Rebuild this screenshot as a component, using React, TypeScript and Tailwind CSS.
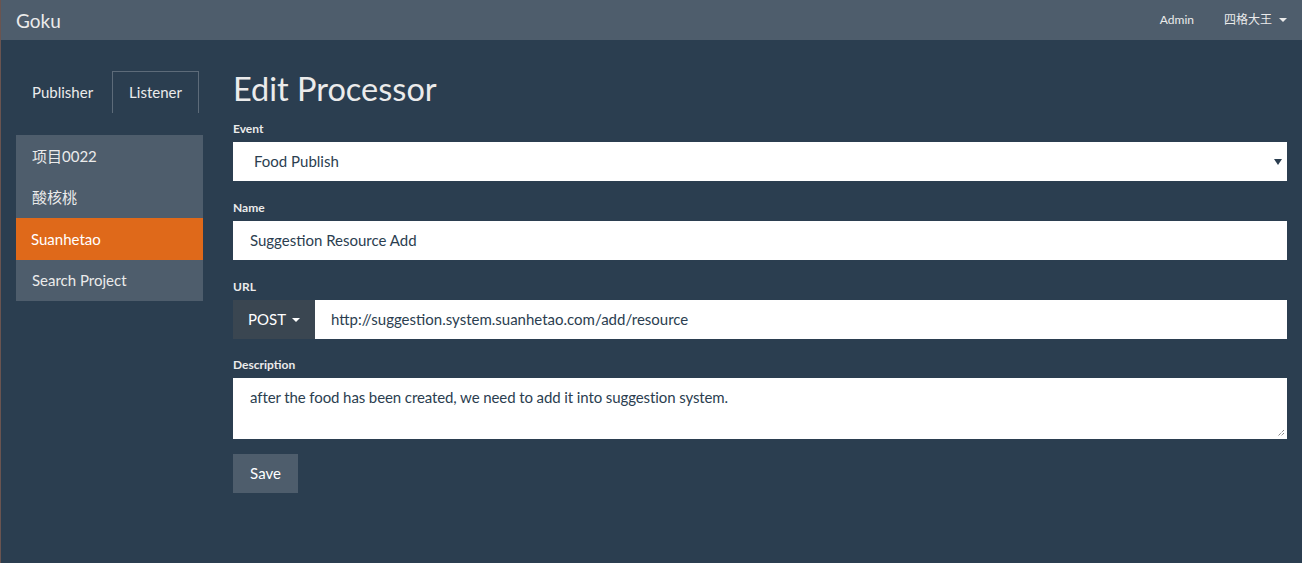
const PROJECTS = [
  { name: "项目0022", active: false },
  { name: "酸核桃", active: false },
  { name: "Suanhetao", active: true },
  { name: "Search Project", active: false },
];

const FONT = "font-['Lato','Noto_Sans_CJK_SC',sans-serif]";

function Caret({ className = "" }: { className?: string }) {
  return (
    <span
      className={`inline-block h-0 w-0 border-x-[4px] border-t-[4px] border-x-transparent ${className}`}
      aria-hidden
    />
  );
}

function Label({ children }: { children: string }) {
  return (
    <label className="mb-[5px] block text-[12px] font-bold leading-[17px] text-[#ebebeb]">
      {children}
    </label>
  );
}

export default function App() {
  return (
    <div
      className={`min-h-screen border-l border-l-[#6a5450] bg-[#2b3e50] text-[15px] text-[#ebebeb] ${FONT}`}
    >
      {/* Navbar */}
      <nav className="flex h-10 items-center justify-between bg-[#4e5d6c] px-[15px]">
        <span className="text-[19px] leading-none text-[#ebebeb]">Goku</span>
        <div className="flex items-center text-[12px] text-[#ebebeb]">
          <span>Admin</span>
          <span className="ml-[30px]">四格大王</span>
          <Caret className="ml-[7px] border-t-[#ebebeb]" />
        </div>
      </nav>

      <div className="flex px-[15px]">
        {/* Sidebar */}
        <aside className="w-[187px] shrink-0 pt-[31px]">
          <div className="flex h-[42px]">
            <div className="flex items-center px-[16px]">Publisher</div>
            <div className="ml-[3px] flex items-center border border-b-0 border-[#5d6b79] px-[16px]">
              Listener
            </div>
          </div>
          <ul className="mt-[22px]">
            {PROJECTS.map((p) => (
              <li
                key={p.name}
                className={`flex h-[41.5px] items-center px-4 ${
                  p.active ? "bg-[#df691a] pl-[15px] text-white" : "bg-[#4e5d6c]"
                }`}
              >
                {p.name}
              </li>
            ))}
          </ul>
        </aside>

        {/* Main */}
        <main className="ml-[30px] flex-1 pt-[31px]">
          <h2 className="text-[32.5px] leading-[36px] text-[#ebebeb]">Edit Processor</h2>

          <div className="mt-[13px]">
            <Label>Event</Label>
            <div className="flex h-[39px] items-center justify-between bg-white pl-[21px] pr-[5px] text-[#2b3e50]">
              <span>Food Publish</span>
              <Caret className="border-x-[3px] border-t-[6px] border-t-[#2b3e50]" />
            </div>
          </div>

          <div className="mt-[18px]">
            <Label>Name</Label>
            <div className="flex h-[39px] items-center bg-white px-[17px] text-[#2b3e50]">
              Suggestion Resource Add
            </div>
          </div>

          <div className="mt-[18px]">
            <Label>URL</Label>
            <div className="flex h-[39px]">
              <button className="flex w-[82px] items-center justify-center gap-[6px] bg-[#3a4651] text-white">
                POST
                <Caret className="border-t-white" />
              </button>
              <div className="flex flex-1 items-center bg-white px-[16px] text-[#2b3e50]">
                http://suggestion.system.suanhetao.com/add/resource
              </div>
            </div>
          </div>

          <div className="mt-[17px]">
            <Label>Description</Label>
            <div className="relative h-[61px] bg-white px-[17px] pt-[9px] leading-[21px] tracking-[-0.1px] text-[#2b3e50]">
              after the food has been created, we need to add it into suggestion system.
              <svg
                className="absolute bottom-[2px] right-[2px]"
                width="8"
                height="8"
                viewBox="0 0 8 8"
                aria-hidden
              >
                <path d="M7 1 L1 7 M7 4 L4 7" stroke="#555" strokeWidth="1" strokeDasharray="1 1" />
              </svg>
            </div>
          </div>

          <button className="mt-[15px] h-[39px] w-[65px] bg-[#4e5d6c] text-white">Save</button>
        </main>
      </div>
    </div>
  );
}
